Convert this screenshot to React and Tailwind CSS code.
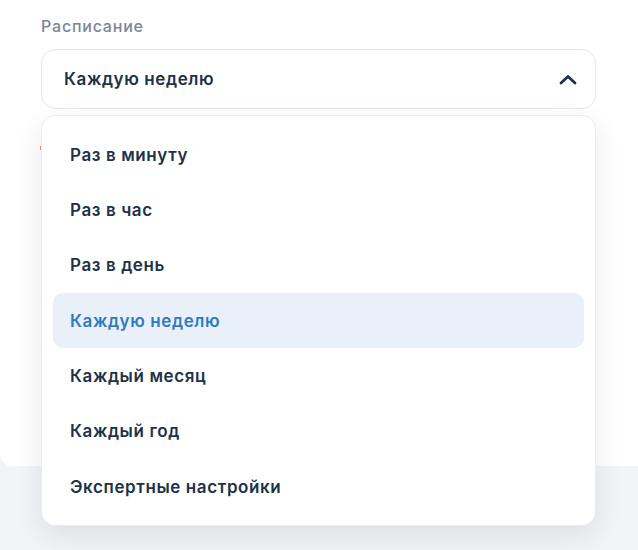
import React from "react";

const items = [
  "Раз в минуту",
  "Раз в час",
  "Раз в день",
  "Каждую неделю",
  "Каждый месяц",
  "Каждый год",
  "Экспертные настройки",
];

export default function App() {
  return (
    <div
      className="relative w-[638px] h-[550px] bg-[#f3f4f7] overflow-hidden"
      style={{ fontFamily: "Inter, 'Noto Sans', sans-serif" }}
    >
      <div className="bg-white h-[466px] rounded-bl-[12px] pl-[41px] pr-[42px] pt-[14px]">
        <div className="text-[16px] leading-6 font-medium tracking-[0.05em] text-[#7b8598]">Расписание</div>
        <div className="mt-[11px] h-[60px] border border-[#e6e7eb] rounded-[14px] pl-[22px] pr-[18px] flex items-center justify-between">
          <span className="pt-px text-[17px] font-semibold tracking-[0.035em] text-[#1d3249]">Каждую неделю</span>
          <svg width="18" height="11" viewBox="0 0 18 11" fill="none">
            <path d="M2 9 L9 2.5 L16 9" stroke="#1d3249" strokeWidth="2.8" strokeLinecap="round" strokeLinejoin="round" />
          </svg>
        </div>
        <div className="mt-[37px] -ml-px w-[2px] h-[4px] bg-[#e8957f]" />
      </div>

      <div className="absolute left-[41px] top-[115px] w-[555px] bg-white border border-[#ebecf0] rounded-[14px] shadow-[0_10px_28px_rgba(30,40,70,0.10)] px-[11px] py-[11px]">
        {items.map((t, i) => (
          <div
            key={t}
            className={
              i === 3
                ? "h-[55.3px] flex items-center pl-[17px] pt-[2px] rounded-[10px] bg-[#e9f0f9] text-[17px] font-semibold tracking-[0.035em] text-[#2f7bbf]"
                : "h-[55.3px] flex items-center pl-[17px] pt-[2px] text-[17px] font-semibold tracking-[0.035em] text-[#1d3249]"
            }
          >
            {t}
          </div>
        ))}
      </div>
    </div>
  );
}
